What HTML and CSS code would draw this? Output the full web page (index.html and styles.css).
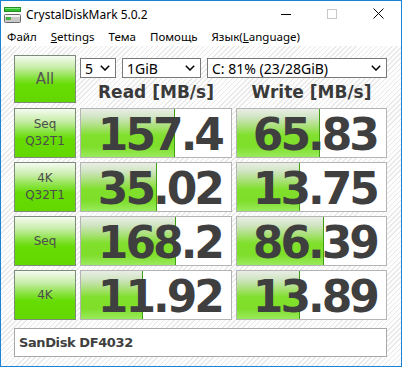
FILE: index.html
```html
<!DOCTYPE html>
<html>
	<head>
		<meta charset="utf-8">
		<title>CrystalDiskMark 5.0.2</title>
		<link rel="stylesheet" href="styles.css">
	</head>
	<body>
		<div class="janela">
			<div class="titulo">
				<svg class="icone" width="18" height="16" viewBox="0 0 18 16">
					<rect x="0.5" y="0.5" width="16" height="4" fill="#2fc12f" stroke="#1f8f1f"/>
					<rect x="1" y="1" width="15" height="1" fill="#7ee07e"/>
					<rect x="0.5" y="7.5" width="16" height="8" rx="1" fill="#c8c8c8" stroke="#6a6a6a"/>
					<rect x="1" y="8" width="15" height="2" fill="#f2f2f2"/>
					<rect x="2.5" y="10.5" width="4" height="2" fill="#32d232" stroke="#1b8a1b" stroke-width="0.6"/>
				</svg>
				<span class="nome">CrystalDiskMark 5.0.2</span>
				<div class="controles">
					<span class="ctl"><svg width="10" height="10" viewBox="0 0 10 10"><path d="M0 5.5h10" stroke="#000" stroke-width="1"/></svg></span>
					<span class="ctl"><svg width="10" height="10" viewBox="0 0 10 10"><rect x="0.5" y="0.5" width="9" height="9" fill="none" stroke="#c8c8c8"/></svg></span>
					<span class="ctl"><svg width="11" height="11" viewBox="0 0 11 11"><path d="M0.5 0.5l10 10M10.5 0.5l-10 10" stroke="#000" stroke-width="1"/></svg></span>
				</div>
			</div>
			<div class="menu">
				<span class="item">Файл</span>
				<span class="item"><u>S</u>ettings</span>
				<span class="item">Тема</span>
				<span class="item">Помощь</span>
				<span class="item">Язык(<u>L</u>anguage)</span>
			</div>
			<div class="principal">
				<div class="botao todos">All</div>
				<div class="topo">
					<div class="selecoes">
						<div class="sel sel-n"><span>5</span><svg width="10" height="6" viewBox="0 0 10 6"><path d="M0.8 0.8l4.2 4.2 4.2-4.2" fill="none" stroke="#000" stroke-width="1.5"/></svg></div>
						<div class="sel sel-tam"><span>1GiB</span><svg width="10" height="6" viewBox="0 0 10 6"><path d="M0.8 0.8l4.2 4.2 4.2-4.2" fill="none" stroke="#000" stroke-width="1.5"/></svg></div>
						<div class="sel sel-disco"><span>C: 81% (23/28GiB)</span><svg width="10" height="6" viewBox="0 0 10 6"><path d="M0.8 0.8l4.2 4.2 4.2-4.2" fill="none" stroke="#000" stroke-width="1.5"/></svg></div>
					</div>
					<div class="cabecalhos">
						<span>Read [MB/s]</span>
						<span>Write [MB/s]</span>
					</div>
				</div>

				<div class="botao">Seq<br>Q32T1</div>
				<div class="resultado"><div class="barra" style="width: 94px"></div><span class="valor">157.4</span></div>
				<div class="resultado"><div class="barra" style="width: 83px"></div><span class="valor">65.83</span></div>

				<div class="botao">4K<br>Q32T1</div>
				<div class="resultado"><div class="barra" style="width: 76px"></div><span class="valor">35.02</span></div>
				<div class="resultado"><div class="barra" style="width: 63px"></div><span class="valor">13.75</span></div>

				<div class="botao">Seq</div>
				<div class="resultado"><div class="barra" style="width: 95px"></div><span class="valor">168.2</span></div>
				<div class="resultado"><div class="barra" style="width: 87px"></div><span class="valor">86.39</span></div>

				<div class="botao">4K</div>
				<div class="resultado"><div class="barra" style="width: 62px"></div><span class="valor">11.92</span></div>
				<div class="resultado"><div class="barra" style="width: 63px"></div><span class="valor">13.89</span></div>

				<div class="comentario">SanDisk DF4032</div>
			</div>
		</div>
	</body>
</html>
```

FILE: styles.css
```css
html, body {
	margin: 0;
	padding: 0;
}

body {
	width: 402px;
	height: 367px;
	overflow: hidden;
	background: #fff;
}

.janela {
	box-sizing: border-box;
	width: 402px;
	height: 367px;
	border: 1px solid #1883d7;
	display: flex;
	flex-direction: column;
	font-family: "Noto Sans", "Open Sans", sans-serif;
	color: #000;
}

.titulo {
	height: 27px;
	display: flex;
	align-items: center;
	background: #fff;
}

.icone {
	margin: 1px 0 0 3px;
}

.nome {
	margin-left: 4px;
	font-size: 12px;
}

.controles {
	margin-left: auto;
	display: flex;
	align-self: stretch;
}

.ctl {
	width: 46px;
	display: flex;
	align-items: center;
	justify-content: center;
	padding-bottom: 2px;
}

.menu {
	height: 18px;
	display: flex;
	align-items: center;
	background: #fff;
	font-size: 11.5px;
}

.item {
	padding: 0 7px;
	line-height: 18px;
}

.item:first-child {
	padding-left: 6px;
}

.principal {
	flex: 1;
	padding: 9px 0 0 13px;
	background: repeating-linear-gradient(135deg, #fdfdfd 0 2.6px, #e9e9e9 2.6px 3.6px);
	display: grid;
	grid-template-columns: 62px 152px 151px;
	grid-template-rows: 49px 50px 50px 50px 50px 33px;
	column-gap: 4px;
	row-gap: 4px;
	align-content: start;
}

.botao {
	box-sizing: border-box;
	height: 50px;
	border: 1px solid #7d8c7a;
	background: linear-gradient(to bottom, #f6fbf2 0%, #c7eda8 25%, #86e23c 48%, #66dc04 62%, #62d800 100%);
	display: flex;
	align-items: center;
	justify-content: center;
	text-align: center;
	font-family: "DejaVu Sans", sans-serif;
	font-size: 12px;
	line-height: 17px;
	color: #4c4c4c;
}

.todos {
	height: 48px;
	font-size: 15px;
	color: #555;
}

.topo {
	grid-column: 2 / 4;
	display: flex;
	flex-direction: column;
}

.selecoes {
	display: flex;
	gap: 6px;
	margin-top: 3px;
}

.sel {
	box-sizing: border-box;
	height: 20px;
	background: #fff;
	border: 1px solid #7a7a7a;
	display: flex;
	align-items: center;
	justify-content: space-between;
	padding: 0 5px 0 4px;
	font-size: 14px;
}

.sel svg {
	flex: none;
}

.sel-n {
	width: 36px;
}

.sel-tam {
	width: 79px;
}

.sel-disco {
	width: 180px;
}

.cabecalhos {
	flex: 1;
	display: grid;
	grid-template-columns: 152px 151px;
	column-gap: 4px;
	align-items: center;
	text-align: center;
	font-family: "DejaVu Sans", sans-serif;
	font-weight: bold;
	font-size: 17px;
	color: #3a3a3a;
	padding-top: 2px;
}

.resultado {
	box-sizing: border-box;
	height: 50px;
	border: 1px solid #b4b4b4;
	background: #fff;
	display: grid;
}

.barra {
	grid-area: 1 / 1;
	justify-self: start;
	height: 48px;
	box-sizing: border-box;
	border-right: 1px solid #3f9e12;
	background: linear-gradient(to bottom, #e9ede6 0%, #cfe4c0 18%, #a6e072 38%, #80e02c 55%, #7ede2a 78%, #9aea5c 100%);
}

.valor {
	grid-area: 1 / 1;
	justify-self: end;
	align-self: start;
	margin: 4px 9px 0 0;
	font-family: "DejaVu Sans", sans-serif;
	font-weight: bold;
	font-size: 44px;
	letter-spacing: -3px;
	line-height: 44px;
	color: #3f3f3f;
}

.comentario {
	grid-column: 1 / 4;
	margin-top: 4px;
	box-sizing: border-box;
	height: 29px;
	border: 1px solid #a8a8a8;
	background: #fff;
	display: flex;
	align-items: center;
	padding-left: 4px;
	font-family: "DejaVu Sans", sans-serif;
	font-weight: bold;
	font-size: 13px;
	letter-spacing: -0.4px;
	color: #404040;
}
```
